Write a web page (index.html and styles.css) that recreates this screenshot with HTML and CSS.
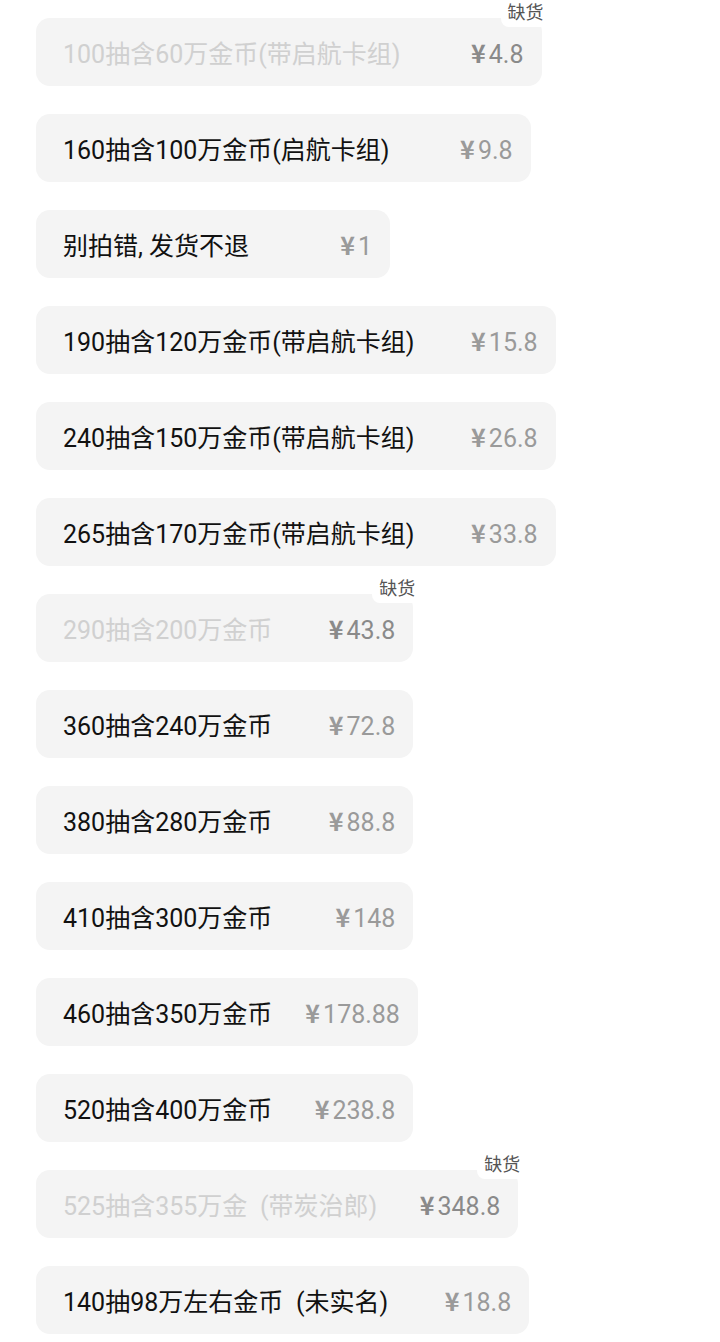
FILE: index.html
```html
<!DOCTYPE html>
<html>
	<head>
		<meta charset="UTF-8">
		<title>商品规格</title>
		<link rel="stylesheet" href="styles.css">
	</head>
	<body>
		<div class="sku-list">
			<div class="sku sold-out">
				<span class="name">100抽含60万金币(带启航卡组)</span>
				<span class="price"><i>¥</i>4.8</span>
				<span class="tag">缺货</span>
			</div>
			<div class="sku">
				<span class="name">160抽含100万金币(启航卡组)</span>
				<span class="price"><i>¥</i>9.8</span>
			</div>
			<div class="sku">
				<span class="name">别拍错, 发货不退</span>
				<span class="price"><i>¥</i>1</span>
			</div>
			<div class="sku">
				<span class="name">190抽含120万金币(带启航卡组)</span>
				<span class="price"><i>¥</i>15.8</span>
			</div>
			<div class="sku">
				<span class="name">240抽含150万金币(带启航卡组)</span>
				<span class="price"><i>¥</i>26.8</span>
			</div>
			<div class="sku">
				<span class="name">265抽含170万金币(带启航卡组)</span>
				<span class="price"><i>¥</i>33.8</span>
			</div>
			<div class="sku sold-out">
				<span class="name">290抽含200万金币</span>
				<span class="price"><i>¥</i>43.8</span>
				<span class="tag">缺货</span>
			</div>
			<div class="sku">
				<span class="name">360抽含240万金币</span>
				<span class="price"><i>¥</i>72.8</span>
			</div>
			<div class="sku">
				<span class="name">380抽含280万金币</span>
				<span class="price"><i>¥</i>88.8</span>
			</div>
			<div class="sku">
				<span class="name">410抽含300万金币</span>
				<span class="price"><i>¥</i>148</span>
			</div>
			<div class="sku">
				<span class="name">460抽含350万金币</span>
				<span class="price"><i>¥</i>178.88</span>
			</div>
			<div class="sku">
				<span class="name">520抽含400万金币</span>
				<span class="price"><i>¥</i>238.8</span>
			</div>
			<div class="sku sold-out">
				<span class="name">525抽含355万金&ensp;(带炭治郎)</span>
				<span class="price"><i>¥</i>348.8</span>
				<span class="tag">缺货</span>
			</div>
			<div class="sku">
				<span class="name">140抽98万左右金币&ensp;(未实名)</span>
				<span class="price"><i>¥</i>18.8</span>
			</div>
		</div>
	</body>
</html>
```

FILE: styles.css
```css
body{
	margin: 0;
	padding: 0;
	background: #fff;
	font-family: Roboto, "Noto Sans CJK SC", sans-serif;
}

.sku-list{
	display: flex;
	flex-direction: column;
	align-items: flex-start;
	gap: 28px;
	padding: 18px 0 0 36px;
}
.sku{
	position: relative;
	display: flex;
	align-items: center;
	height: 68px;
	padding: 0 18px 0 27px;
	background: #f4f4f4;
	border-radius: 14px;
}
.sku .name{
	font-size: 25px;
	color: #111;
	margin-right: 33px;
	white-space: nowrap;
}
.sku .price{
	min-width: 90px;
	text-align: right;
	font-size: 25px;
	color: #9a9a9a;
	white-space: nowrap;
}
.price i{
	font-style: normal;
	font-family: "Noto Sans CJK SC", sans-serif;
	font-weight: bold;
	margin-right: 3px;
}
.sold-out .name{
	color: #d0d0d0;
}
.sold-out .price{
	color: #8a8a8a;
}
.tag{
	position: absolute;
	top: -17px;
	right: -6px;
	padding: 1px 4px 3px 7px;
	background: #fff;
	border-radius: 0 0 0 8px;
	font-size: 18px;
	line-height: 22px;
	color: #555;
}
```
